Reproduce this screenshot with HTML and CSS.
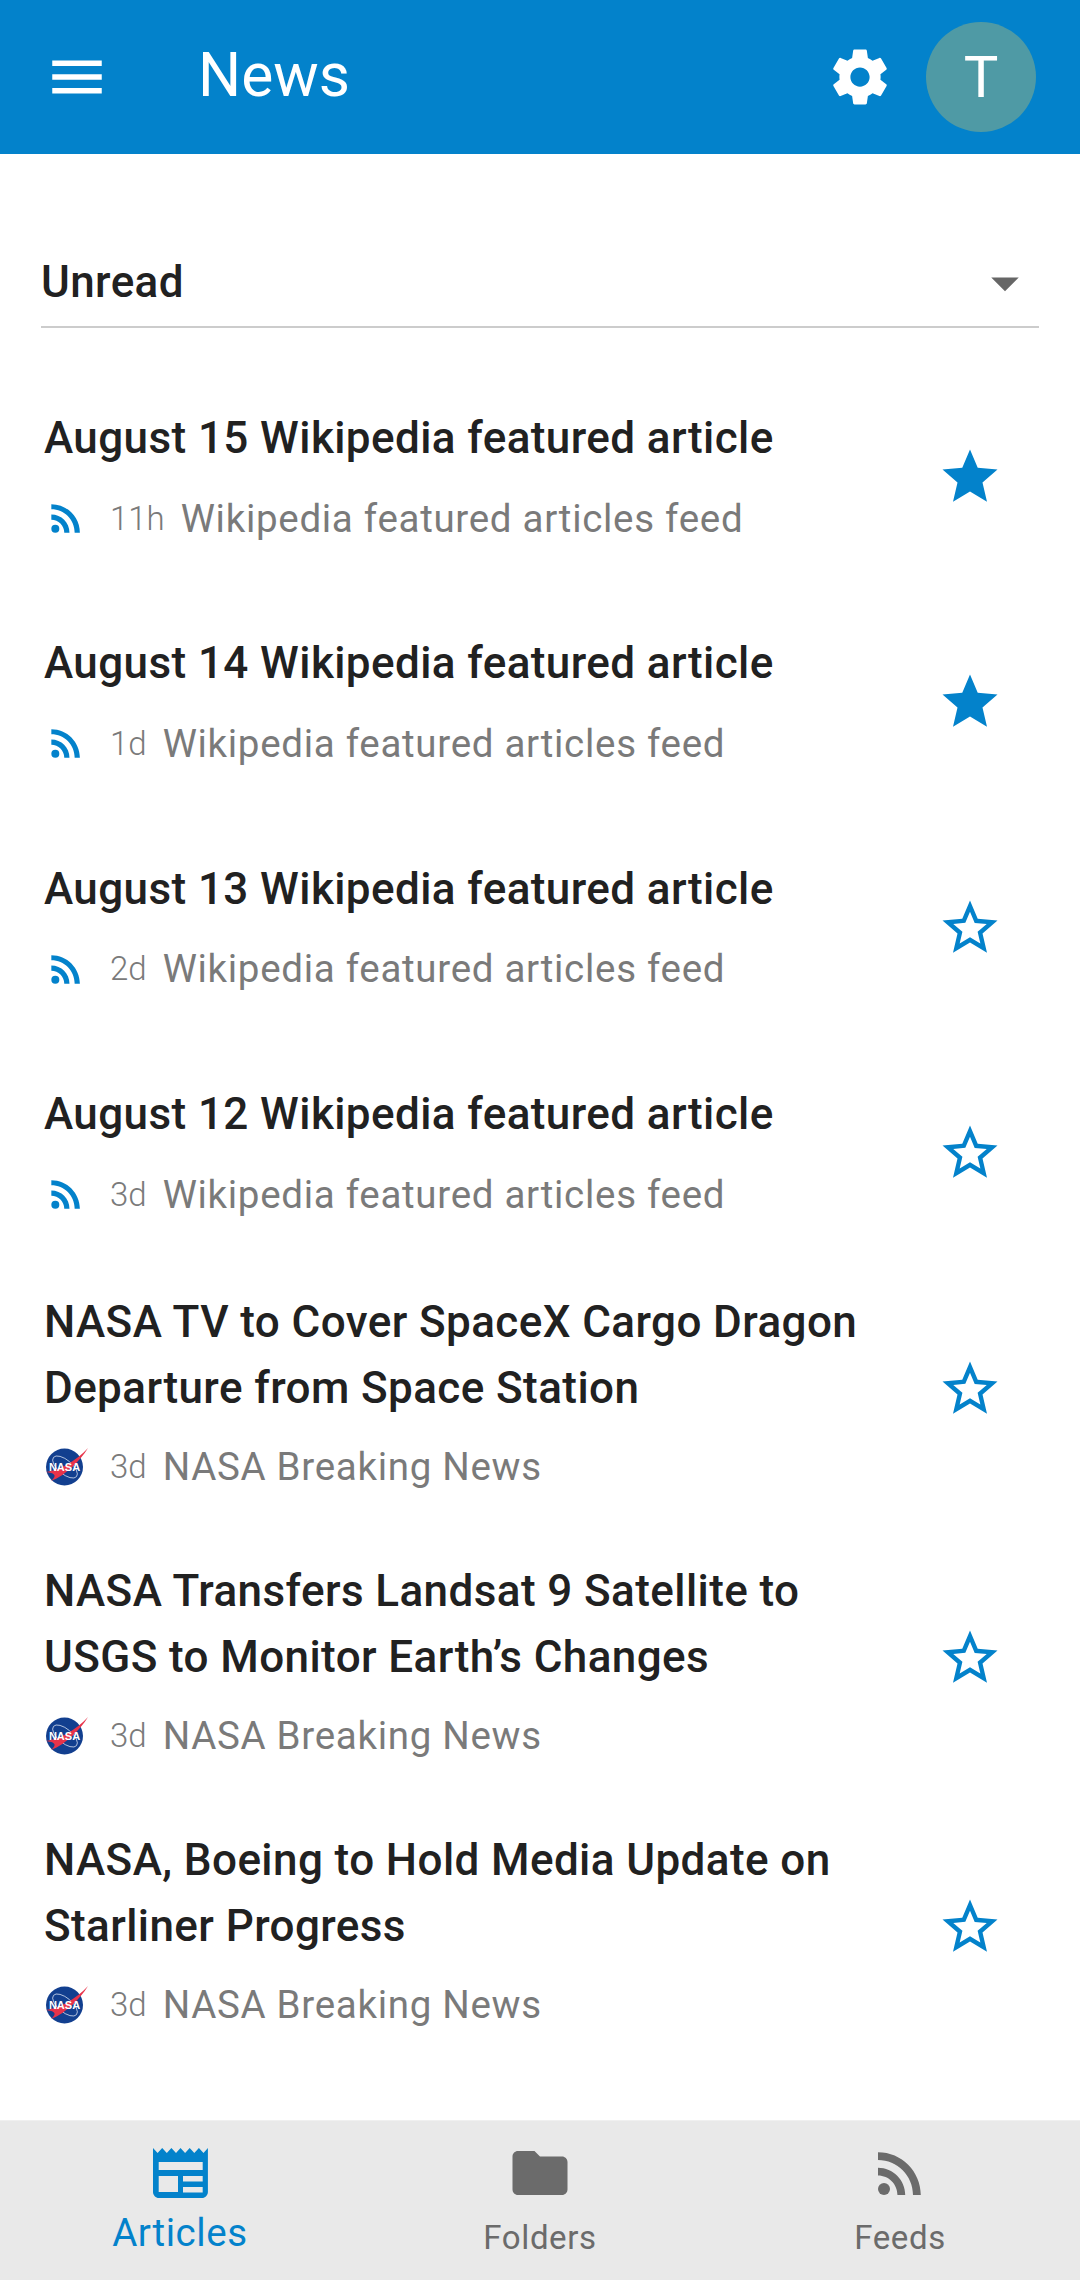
FILE: index.html
```html
<!DOCTYPE html>
<html lang="en">
<head>
    <meta charset="UTF-8">
    <meta name="viewport" content="width=device-width, initial-scale=1.0">
    <title>News</title>
    <link rel="stylesheet" href="styles.css">
</head>
<body>
    <svg class="defs">
        <symbol id="star" viewBox="0 0 24 24"><path d="M12 17.27L18.18 21l-1.64-7.03L22 9.24l-7.19-.61L12 2 9.19 8.63 2 9.24l5.46 4.73L5.82 21z"/></symbol>
        <symbol id="star-outline" viewBox="0 0 24 24"><path d="M22 9.24l-7.19-.62L12 2 9.19 8.63 2 9.24l5.46 4.73L5.82 21 12 17.27 18.18 21l-1.63-7.03L22 9.24zM12 15.4l-3.76 2.27 1-4.28-3.32-2.88 4.38-.38L12 6.1l1.71 4.04 4.38.38-3.32 2.88 1 4.28L12 15.4z"/></symbol>
        <symbol id="rss" viewBox="0 0 24 24"><circle cx="6.18" cy="17.82" r="2.18"/><path d="M4 4.44v2.83c7.03 0 12.73 5.7 12.73 12.73h2.83c0-8.59-6.97-15.56-15.56-15.56zm0 5.66v2.83c3.9 0 7.07 3.17 7.07 7.07h2.83c0-5.47-4.43-9.9-9.9-9.9z"/></symbol>
        <symbol id="nasa" viewBox="0 0 44 44">
            <circle cx="20.5" cy="22" r="18.5" fill="#123f8f"/>
            <ellipse cx="21" cy="22" rx="15" ry="7" fill="none" stroke="#c9d4ea" stroke-width=".8" transform="rotate(40 21 22)"/>
            <path d="M2 27C16 25 32 16 44 3 36 16 22 30 7 36 14 30 10 28 2 27z" fill="#e8334a"/>
            <text x="20.5" y="26" class="nasa-text">NASA</text>
        </symbol>
    </svg>

    <header class="app-bar">
        <svg class="icon-lg" viewBox="0 0 24 24"><path d="M3 18h18v-2H3v2zm0-5h18v-2H3v2zm0-7v2h18V6H3z"/></svg>
        <h1 class="app-title">News</h1>
        <svg class="icon-lg" viewBox="0 0 24 24"><path d="M19.43 12.98c.04-.32.07-.64.07-.98s-.03-.66-.07-.98l2.11-1.65c.19-.15.24-.42.12-.64l-2-3.46c-.12-.22-.39-.3-.61-.22l-2.49 1c-.52-.4-1.08-.73-1.69-.98l-.38-2.65C14.46 2.18 14.25 2 14 2h-4c-.25 0-.46.18-.49.42l-.38 2.65c-.61.25-1.17.59-1.69.98l-2.49-1c-.23-.09-.49 0-.61.22l-2 3.46c-.13.22-.07.49.12.64l2.11 1.65c-.04.32-.07.65-.07.98s.03.66.07.98l-2.11 1.65c-.19.15-.24.42-.12.64l2 3.46c.12.22.39.3.61.22l2.49-1c.52.4 1.08.73 1.69.98l.38 2.65c.03.24.24.42.49.42h4c.25 0 .46-.18.49-.42l.38-2.65c.61-.25 1.17-.59 1.69-.98l2.49 1c.23.09.49 0 .61-.22l2-3.46c.12-.22.07-.49-.12-.64l-2.11-1.65zM12 15.5c-1.93 0-3.5-1.57-3.5-3.5s1.57-3.5 3.5-3.5 3.5 1.57 3.5 3.5-1.57 3.5-3.5 3.5z"/></svg>
        <div class="avatar">T</div>
    </header>

    <main class="content">
        <div class="filter">
            <span class="filter-label">Unread</span>
            <svg class="filter-arrow" viewBox="0 0 24 24"><path d="M7 10l5 5 5-5z"/></svg>
        </div>

        <section class="group group-wiki">
            <article class="item">
                <div class="item-text">
                    <h2 class="item-title">August 15 Wikipedia featured article</h2>
                    <div class="meta">
                        <svg class="feed-icon rss-icon"><use href="#rss"/></svg>
                        <span class="meta-age">11h</span>
                        <span class="meta-source">Wikipedia featured articles feed</span>
                    </div>
                </div>
                <svg class="star"><use href="#star"/></svg>
            </article>
            <article class="item">
                <div class="item-text">
                    <h2 class="item-title">August 14 Wikipedia featured article</h2>
                    <div class="meta">
                        <svg class="feed-icon rss-icon"><use href="#rss"/></svg>
                        <span class="meta-age">1d</span>
                        <span class="meta-source">Wikipedia featured articles feed</span>
                    </div>
                </div>
                <svg class="star"><use href="#star"/></svg>
            </article>
            <article class="item">
                <div class="item-text">
                    <h2 class="item-title">August 13 Wikipedia featured article</h2>
                    <div class="meta">
                        <svg class="feed-icon rss-icon"><use href="#rss"/></svg>
                        <span class="meta-age">2d</span>
                        <span class="meta-source">Wikipedia featured articles feed</span>
                    </div>
                </div>
                <svg class="star"><use href="#star-outline"/></svg>
            </article>
            <article class="item">
                <div class="item-text">
                    <h2 class="item-title">August 12 Wikipedia featured article</h2>
                    <div class="meta">
                        <svg class="feed-icon rss-icon"><use href="#rss"/></svg>
                        <span class="meta-age">3d</span>
                        <span class="meta-source">Wikipedia featured articles feed</span>
                    </div>
                </div>
                <svg class="star"><use href="#star-outline"/></svg>
            </article>
        </section>

        <section class="group group-nasa">
            <article class="item">
                <div class="item-text">
                    <h2 class="item-title">NASA TV to Cover SpaceX Cargo Dragon<br>Departure from Space Station</h2>
                    <div class="meta">
                        <svg class="feed-icon"><use href="#nasa"/></svg>
                        <span class="meta-age">3d</span>
                        <span class="meta-source">NASA Breaking News</span>
                    </div>
                </div>
                <svg class="star"><use href="#star-outline"/></svg>
            </article>
            <article class="item">
                <div class="item-text">
                    <h2 class="item-title">NASA Transfers Landsat 9 Satellite to<br>USGS to Monitor Earth’s Changes</h2>
                    <div class="meta">
                        <svg class="feed-icon"><use href="#nasa"/></svg>
                        <span class="meta-age">3d</span>
                        <span class="meta-source">NASA Breaking News</span>
                    </div>
                </div>
                <svg class="star"><use href="#star-outline"/></svg>
            </article>
            <article class="item">
                <div class="item-text">
                    <h2 class="item-title">NASA, Boeing to Hold Media Update on<br>Starliner Progress</h2>
                    <div class="meta">
                        <svg class="feed-icon"><use href="#nasa"/></svg>
                        <span class="meta-age">3d</span>
                        <span class="meta-source">NASA Breaking News</span>
                    </div>
                </div>
                <svg class="star"><use href="#star-outline"/></svg>
            </article>
        </section>
    </main>

    <nav class="bottom-nav">
        <div class="tab tab-active">
            <svg class="tab-icon" viewBox="0 0 55 50"><path fill-rule="evenodd" d="M0 0l4.600 5 4.600-5 4.600 5 4.600-5 4.600 5 4.500-5 4.600 5 4.600-5 4.600 5 4.600-5 4.600 5 4.400-5v44c0 3.300-2.700 6-6 6H6c-3.300 0-6-2.700-6-6zM5.700 14v8h44v-8zM5.700 28v16H25V28zM30 28v5.600h19.700V28zM30 39v5.600h19.700V39z"/></svg>
            <span class="tab-label">Articles</span>
        </div>
        <div class="tab">
            <svg class="tab-icon" viewBox="0 0 24 24"><path d="M10 4H4c-1.100 0-2 .9-2 2v12c0 1.100.9 2 2 2h16c1.100 0 2-.9 2-2V8c0-1.100-.9-2-2-2h-8l-2-2z"/></svg>
            <span class="tab-label">Folders</span>
        </div>
        <div class="tab">
            <svg class="tab-icon"><use href="#rss"/></svg>
            <span class="tab-label">Feeds</span>
        </div>
    </nav>
</body>
</html>
```

FILE: styles.css
```css
* {
    box-sizing: border-box;
}
html, body {
    margin: 0;
    height: 2280px;
    overflow: hidden;
}
body {
    display: flex;
    flex-direction: column;
    font-family: Roboto, sans-serif;
    background-color: #fff;
    color: #212121;
}
.defs {
    display: none;
}
.app-bar {
    display: flex;
    align-items: center;
    flex: none;
    height: 154px;
    padding: 0 44px;
    background-color: #0382cb;
    color: #fff;
    fill: #fff;
}
.icon-lg {
    flex: none;
    width: 66px;
    height: 66px;
}
.app-title {
    flex: 1;
    margin: 0 0 4px 88px;
    font-size: 60.5px;
    font-weight: 400;
}
.avatar {
    display: flex;
    align-items: center;
    justify-content: center;
    flex: none;
    width: 110px;
    height: 110px;
    margin-left: 33px;
    border-radius: 50%;
    background-color: #4f9aa5;
    font-size: 58px;
}
.content {
    flex: 1;
    min-height: 0;
}
.filter {
    display: flex;
    align-items: center;
    justify-content: space-between;
    height: 70px;
    margin: 104px 41px 0 41px;
    border-bottom: 2px solid #ccc;
}
.filter-label {
    margin-bottom: 20px;
    font-size: 44px;
    font-weight: 500;
    letter-spacing: .4px;
}
.filter-arrow {
    width: 66px;
    height: 66px;
    margin-right: 1px;
    margin-bottom: 18px;
    fill: #666;
}
.group-wiki {
    display: flex;
    flex-direction: column;
    gap: 22.4px;
    padding-top: 43px;
}
.group-wiki .star {
    margin-top: 9px;
}
.group-nasa {
    margin-top: 5px;
}
.group-nasa .item {
    padding-bottom: 35.5px;
}
.group-nasa .meta {
    margin-top: 23.5px;
}
.item {
    display: flex;
    align-items: center;
    padding: 34px 77px 34px 44px;
}
.item-text {
    flex: 1;
    min-width: 0;
}
.item-title {
    margin: 0;
    font-size: 44px;
    font-weight: 500;
    line-height: 66px;
    letter-spacing: .41px;
}
.meta {
    display: flex;
    align-items: center;
    height: 44px;
    margin-top: 25px;
    color: #7a7a7a;
}
.feed-icon {
    flex: none;
    width: 44px;
    height: 44px;
    margin-right: 22px;
}
.rss-icon {
    fill: #0382cb;
}
.nasa-text {
    font-family: "Liberation Sans", sans-serif;
    font-size: 11px;
    font-weight: 700;
    text-anchor: middle;
    fill: #fff;
}
.meta-age {
    margin-right: 16px;
    font-size: 33px;
    font-weight: 300;
}
.meta-source {
    font-size: 38.5px;
    letter-spacing: .7px;
}
.star {
    flex: none;
    width: 66px;
    height: 66px;
    fill: #0382cb;
}
.bottom-nav {
    display: grid;
    grid-template-columns: repeat(3, 1fr);
    flex: none;
    height: 160px;
    border-top: 1px solid #f0f0f0;
    background-color: #e9e9e9;
    color: #6b6b6b;
    fill: #6b6b6b;
}
.tab {
    display: flex;
    flex-direction: column;
    align-items: center;
    padding-top: 19px;
}
.tab-icon {
    width: 66px;
    height: 66px;
}
.tab-label {
    margin-top: 12px;
    font-size: 33px;
    letter-spacing: .6px;
}
.tab-active {
    color: #0382cb;
    fill: #0382cb;
}
.tab-active .tab-icon {
    width: 55px;
    height: 50px;
    margin-top: 8px;
}
.tab-active .tab-label {
    margin-top: 12px;
    font-size: 38.5px;
}
```
